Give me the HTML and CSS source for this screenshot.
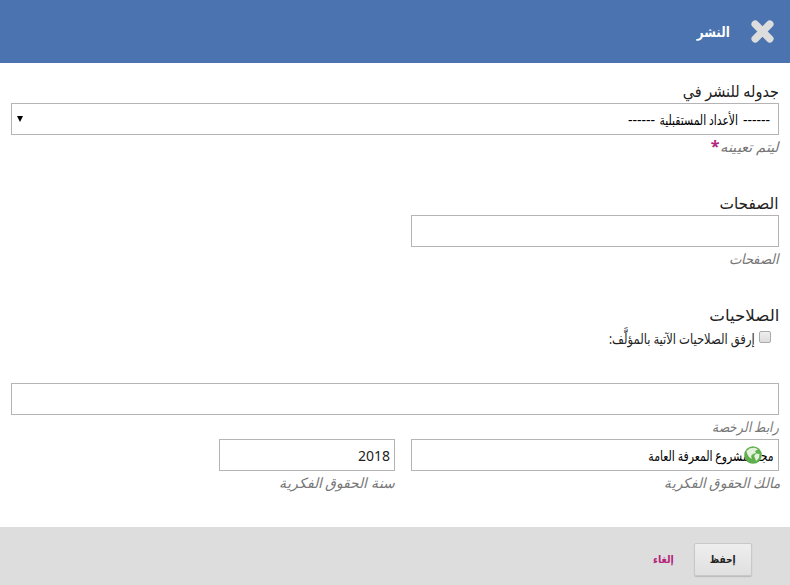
FILE: index.html
```html
<!DOCTYPE html>
<html lang="ar" dir="rtl">
<head><meta charset="utf-8"><title>النشر</title><link rel="stylesheet" href="styles.css"></head>
<body>
<div class="modal">
<header class="header">
<svg class="close" viewBox="0 0 24 24"><path d="M5 5 19 19M19 5 5 19"/></svg>
<h1 class="title"><span class="fit t-title">النشر</span></h1>
</header>
<main class="form">
<section class="section">
<div class="label"><span class="fit t-schedule">جدوله للنشر في</span></div>
<div class="field select"><span class="option"><span>------</span><span class="fit t-option">الأعداد المستقبلية</span><span>------</span></span><span class="arrow"></span></div>
<div class="hint"><span class="fit t-assign">ليتم تعيينه</span><b class="req">*</b></div>
</section>
<section class="section">
<div class="label"><span class="fit t-pages">الصفحات</span></div>
<div class="field half"></div>
<div class="hint"><span class="fit t-pages-hint">الصفحات</span></div>
</section>
<section class="perms">
<div class="label"><span class="fit t-perms">الصلاحيات</span></div>
<label class="check"><span class="box"></span><span class="fit t-check">إرفق الصلاحيات الآتية بالمؤلَّف:</span></label>
</section>
<section class="license">
<div class="field"></div>
<div class="hint"><span class="fit t-license">رابط الرخصة</span></div>
</section>
<div class="row">
<div class="holder"><div class="field"><span class="fit t-holder">مجلة مشروع المعرفة العامة</span><svg class="globe" viewBox="0 0 18 18"><circle cx="9" cy="9" r="8.8" fill="#5fb04d"/><path d="M2.5 5 6 2.2 11 1.8 14 3.5 11 5 12 7 9 8 7 10 8 13 5 11 3 7.5ZM12 7.5 15.5 8 15 12 12 15 11 12 10 10Z" fill="#e4f1dd"/></svg></div><div class="hint"><span class="fit t-owner">مالك الحقوق الفكرية</span></div></div>
<div class="year"><div class="field">2018</div><div class="hint"><span class="fit">سنة الحقوق الفكرية</span></div></div>
</div>
</main>
<footer class="footer"><button class="save"><span class="fit t-save">إحفظ</span></button><a class="cancel"><span class="fit t-cancel">إلغاء</span></a></footer>
</div>
</body>
</html>
```
FILE: styles.css
```css
*{box-sizing:border-box}
body{margin:0;background:#fff;color:#222;font:14px/20px "Noto Sans","DejaVu Sans",sans-serif}
.modal{height:585px;display:flex;flex-direction:column;overflow:hidden}
.header{height:63px;flex:none;background:#4b73af;display:flex;align-items:center;padding:0 15px;gap:20px}
.close{width:25px;height:25px;fill:none;stroke:#ddd;stroke-width:7.2;stroke-linecap:round}
.title{margin:0;font-size:14px;line-height:20px;color:#fff}
.fit{display:inline-block;transform-origin:right center;white-space:nowrap}
.t-title{transform:scaleX(.85)}
.t-schedule{transform:scaleX(.9)}
.t-pages{transform:scaleX(.96)}
.t-perms{transform:scaleX(1.04)}
.t-assign{transform:scaleX(1.06);margin-left:4px}
.t-pages-hint{transform:scaleX(.95)}
.t-license{transform:scaleX(.87)}
.t-owner{transform:scaleX(.965)}
.t-check{transform:scaleX(.825)}
.t-option{transform:scaleX(.77);margin:0 5px 0 -19px}
.t-holder{transform:scaleX(.775)}
.t-save{transform:scaleX(.82);transform-origin:center}
.t-cancel{transform:scaleX(.87)}
.form{flex:1;padding:19px 11px 0}
.section{height:112px}
.perms{height:77px}
.label{font-size:16px;line-height:18px;height:21px}
.field{position:relative;height:32px;border:1px solid #b4b4b4;background:#fff;padding:0 4px;line-height:31px;white-space:nowrap}
.hint{font-size:14px;line-height:24px;height:24px;color:#777;font-style:italic;white-space:nowrap}
.req{color:#b4237a;font-size:16px;line-height:20px;font-style:normal}
.half{width:368px}
.select{display:flex;justify-content:space-between;align-items:center;padding:0 8px;color:#000}
.option{display:flex}
.arrow{margin-left:-3px;border:3.5px solid transparent;border-top:6px solid #000;border-bottom:0}
.check{display:flex;gap:4px;padding-right:8px;height:24px;line-height:24px}
.box{width:12px;height:12px;margin-top:4px;border:1px solid #aaa;border-radius:2px;background:linear-gradient(#eee,#ddd)}
.license{height:56px}
.row{display:flex;gap:16px}
.holder{width:368px}
.year{width:176px}
.holder .field{color:#000}
.globe{position:absolute;right:16px;top:6px;width:18px;height:18px}
.footer{height:58px;flex:none;background:#ddd;display:flex;align-items:center;padding:6px 38px 0;gap:20px;font-size:11px;font-weight:bold}
.save{width:58px;height:33px;padding:0;border:1px solid #c8c8c8;border-radius:2px;background:linear-gradient(#eee,#e0e0e0);box-shadow:0 1px 1px #bbb;font:inherit;color:#222}
.cancel{color:#b4237a}
```
